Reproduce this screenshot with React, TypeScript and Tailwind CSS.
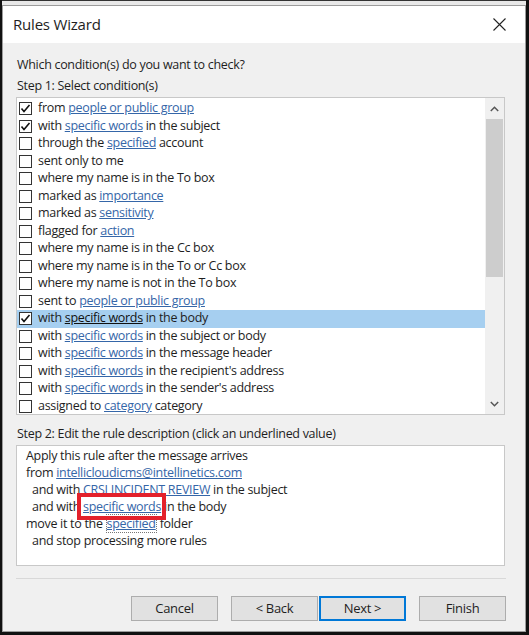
import { useState } from 'react'

type Part = { text: string; link?: boolean }
type Condition = { parts: Part[]; checked?: boolean }

const conditions: Condition[] = [
  { checked: true, parts: [{ text: 'from ' }, { text: 'people or public group', link: true }] },
  { checked: true, parts: [{ text: 'with ' }, { text: 'specific words', link: true }, { text: ' in the subject' }] },
  { parts: [{ text: 'through the ' }, { text: 'specified', link: true }, { text: ' account' }] },
  { parts: [{ text: 'sent only to me' }] },
  { parts: [{ text: 'where my name is in the To box' }] },
  { parts: [{ text: 'marked as ' }, { text: 'importance', link: true }] },
  { parts: [{ text: 'marked as ' }, { text: 'sensitivity', link: true }] },
  { parts: [{ text: 'flagged for ' }, { text: 'action', link: true }] },
  { parts: [{ text: 'where my name is in the Cc box' }] },
  { parts: [{ text: 'where my name is in the To or Cc box' }] },
  { parts: [{ text: 'where my name is not in the To box' }] },
  { parts: [{ text: 'sent to ' }, { text: 'people or public group', link: true }] },
  { checked: true, parts: [{ text: 'with ' }, { text: 'specific words', link: true }, { text: ' in the body' }] },
  { parts: [{ text: 'with ' }, { text: 'specific words', link: true }, { text: ' in the subject or body' }] },
  { parts: [{ text: 'with ' }, { text: 'specific words', link: true }, { text: ' in the message header' }] },
  { parts: [{ text: 'with ' }, { text: 'specific words', link: true }, { text: " in the recipient's address" }] },
  { parts: [{ text: 'with ' }, { text: 'specific words', link: true }, { text: " in the sender's address" }] },
  { parts: [{ text: 'assigned to ' }, { text: 'category', link: true }, { text: ' category' }] },
]

const Checkbox = ({ checked }: { checked?: boolean }) => (
  <span className="w-[13px] h-[13px] shrink-0 border border-[#333] bg-white flex items-center justify-center">
    {checked && (
      <svg width="11" height="11" viewBox="0 0 11 11">
        <path d="M1.5 5.5 L4 8.5 L9.5 2" fill="none" stroke="#111" strokeWidth="1.6" />
      </svg>
    )}
  </span>
)

const Link = ({ children, dark }: { children: React.ReactNode; dark?: boolean }) => (
  <span className={dark ? 'underline text-[#111]' : 'underline text-[#3566a8]'}>{children}</span>
)

const Button = ({ label, primary }: { label: string; primary?: boolean }) => (
  <button
    className={
      primary
        ? 'w-[87px] h-[25px] bg-[#e1e1e1] border-2 border-[#0078d7] text-[13px] text-[#1e1e1e]'
        : 'w-[87px] h-[25px] bg-[#e1e1e1] border border-[#adadad] text-[13px] text-[#1e1e1e]'
    }
  >
    {label}
  </button>
)

const App = () => {
  const [selected, setSelected] = useState(12)

  return (
    <div className="w-[529px] h-[635px] bg-[#111] flex flex-col pl-[2px] pr-[3px] pb-[3px] font-['Open_Sans','Noto_Sans',sans-serif] text-[#1e1e1e]">
      {/* strip of the window behind */}
      <div className="h-[5px] shrink-0 bg-[#e8e8e8] border-t border-[#333]" />

      <div className="flex-1 flex flex-col bg-[#f0f0f0] border border-[#9c9c9c]">
        {/* title bar */}
        <div className="h-[37px] shrink-0 bg-white flex items-center justify-between pl-[10px] pr-[19px]">
          <span className="text-[15px] tracking-[-0.2px]">Rules Wizard</span>
          <svg width="13" height="13" viewBox="0 0 13 13">
            <path d="M0.5 0.5 L12.5 12.5 M12.5 0.5 L0.5 12.5" stroke="#222" strokeWidth="1.1" />
          </svg>
        </div>

        <div className="flex-1 flex flex-col pl-[13px] pr-[20px] text-[12.5px] tracking-[-0.3px]">
          <div className="h-[20px] mt-[12px] flex items-center pl-[1px]">Which condition(s) do you want to check?</div>
          <div className="h-[20px] mt-[1px] flex items-center pl-[1px]">Step 1: Select condition(s)</div>

          {/* condition list */}
          <div className="h-[318px] mt-[1px] border border-[#c8c8c8] bg-white flex">
            <div className="flex-1 pt-[2px]">
              {conditions.map((c, i) => (
                <div
                  key={i}
                  onClick={() => setSelected(i)}
                  className={
                    i === selected
                      ? 'h-[17.5px] flex items-center pl-[2px] gap-[6px] bg-[#a6cff0] whitespace-nowrap'
                      : 'h-[17.5px] flex items-center pl-[2px] gap-[6px] whitespace-nowrap'
                  }
                >
                  <Checkbox checked={c.checked} />
                  <span>
                    {c.parts.map((p, j) =>
                      p.link ? (
                        <Link key={j} dark={i === selected}>
                          {p.text}
                        </Link>
                      ) : (
                        <span key={j}>{p.text}</span>
                      )
                    )}
                  </span>
                </div>
              ))}
            </div>

            {/* scrollbar */}
            <div className="w-[19px] bg-[#f0f0f0] flex flex-col">
              <div className="h-[21px] flex items-center justify-center">
                <svg width="9" height="6" viewBox="0 0 9 6">
                  <path d="M0.8 5 L4.5 1.3 L8.2 5" fill="none" stroke="#555" strokeWidth="1.5" />
                </svg>
              </div>
              <div className="h-[158px] mx-[1px] bg-[#cdcdcd]" />
              <div className="flex-1" />
              <div className="h-[20px] flex items-center justify-center">
                <svg width="9" height="6" viewBox="0 0 9 6">
                  <path d="M0.8 1 L4.5 4.7 L8.2 1" fill="none" stroke="#555" strokeWidth="1.5" />
                </svg>
              </div>
            </div>
          </div>

          <div className="h-[20px] mt-[9px] flex items-center pl-[1px]">Step 2: Edit the rule description (click an underlined value)</div>

          {/* rule description */}
          <div className="h-[121px] mt-[1px] border border-[#c8c8c8] bg-white pt-[1px] pl-[9px] leading-[17px]">
            <div>Apply this rule after the message arrives</div>
            <div>
              from <Link>intellicloudicms@intellinetics.com</Link>
            </div>
            <div className="pl-[6px]">
              and with <Link>CRSI INCIDENT REVIEW</Link> in the subject
            </div>
            <div className="pl-[6px]">
              and with{' '}
              <span className="relative">
                <Link>specific words</Link>
                <span className="absolute -left-[6px] -right-[5px] -top-[5px] -bottom-[5px] border-[4px] border-[#e3212b]" />
              </span>{' '}
              in the body
            </div>
            <div>
              move it to the{' '}
              <span className="border border-dotted border-[#777]">
                <Link>specified</Link>
              </span>{' '}
              folder
            </div>
            <div className="pl-[6px]">and stop processing more rules</div>
          </div>

          <div className="h-px mt-[12px] bg-[#d8d8d8] mr-[-1px]" />

          <div className="flex justify-end gap-[13px] mt-[17px] mr-[-1px]">
            <Button label="Cancel" />
            <div className="flex gap-[1px]">
              <Button label="< Back" />
              <Button label="Next >" primary />
            </div>
            <Button label="Finish" />
          </div>
        </div>
      </div>
    </div>
  )
}

export default App
